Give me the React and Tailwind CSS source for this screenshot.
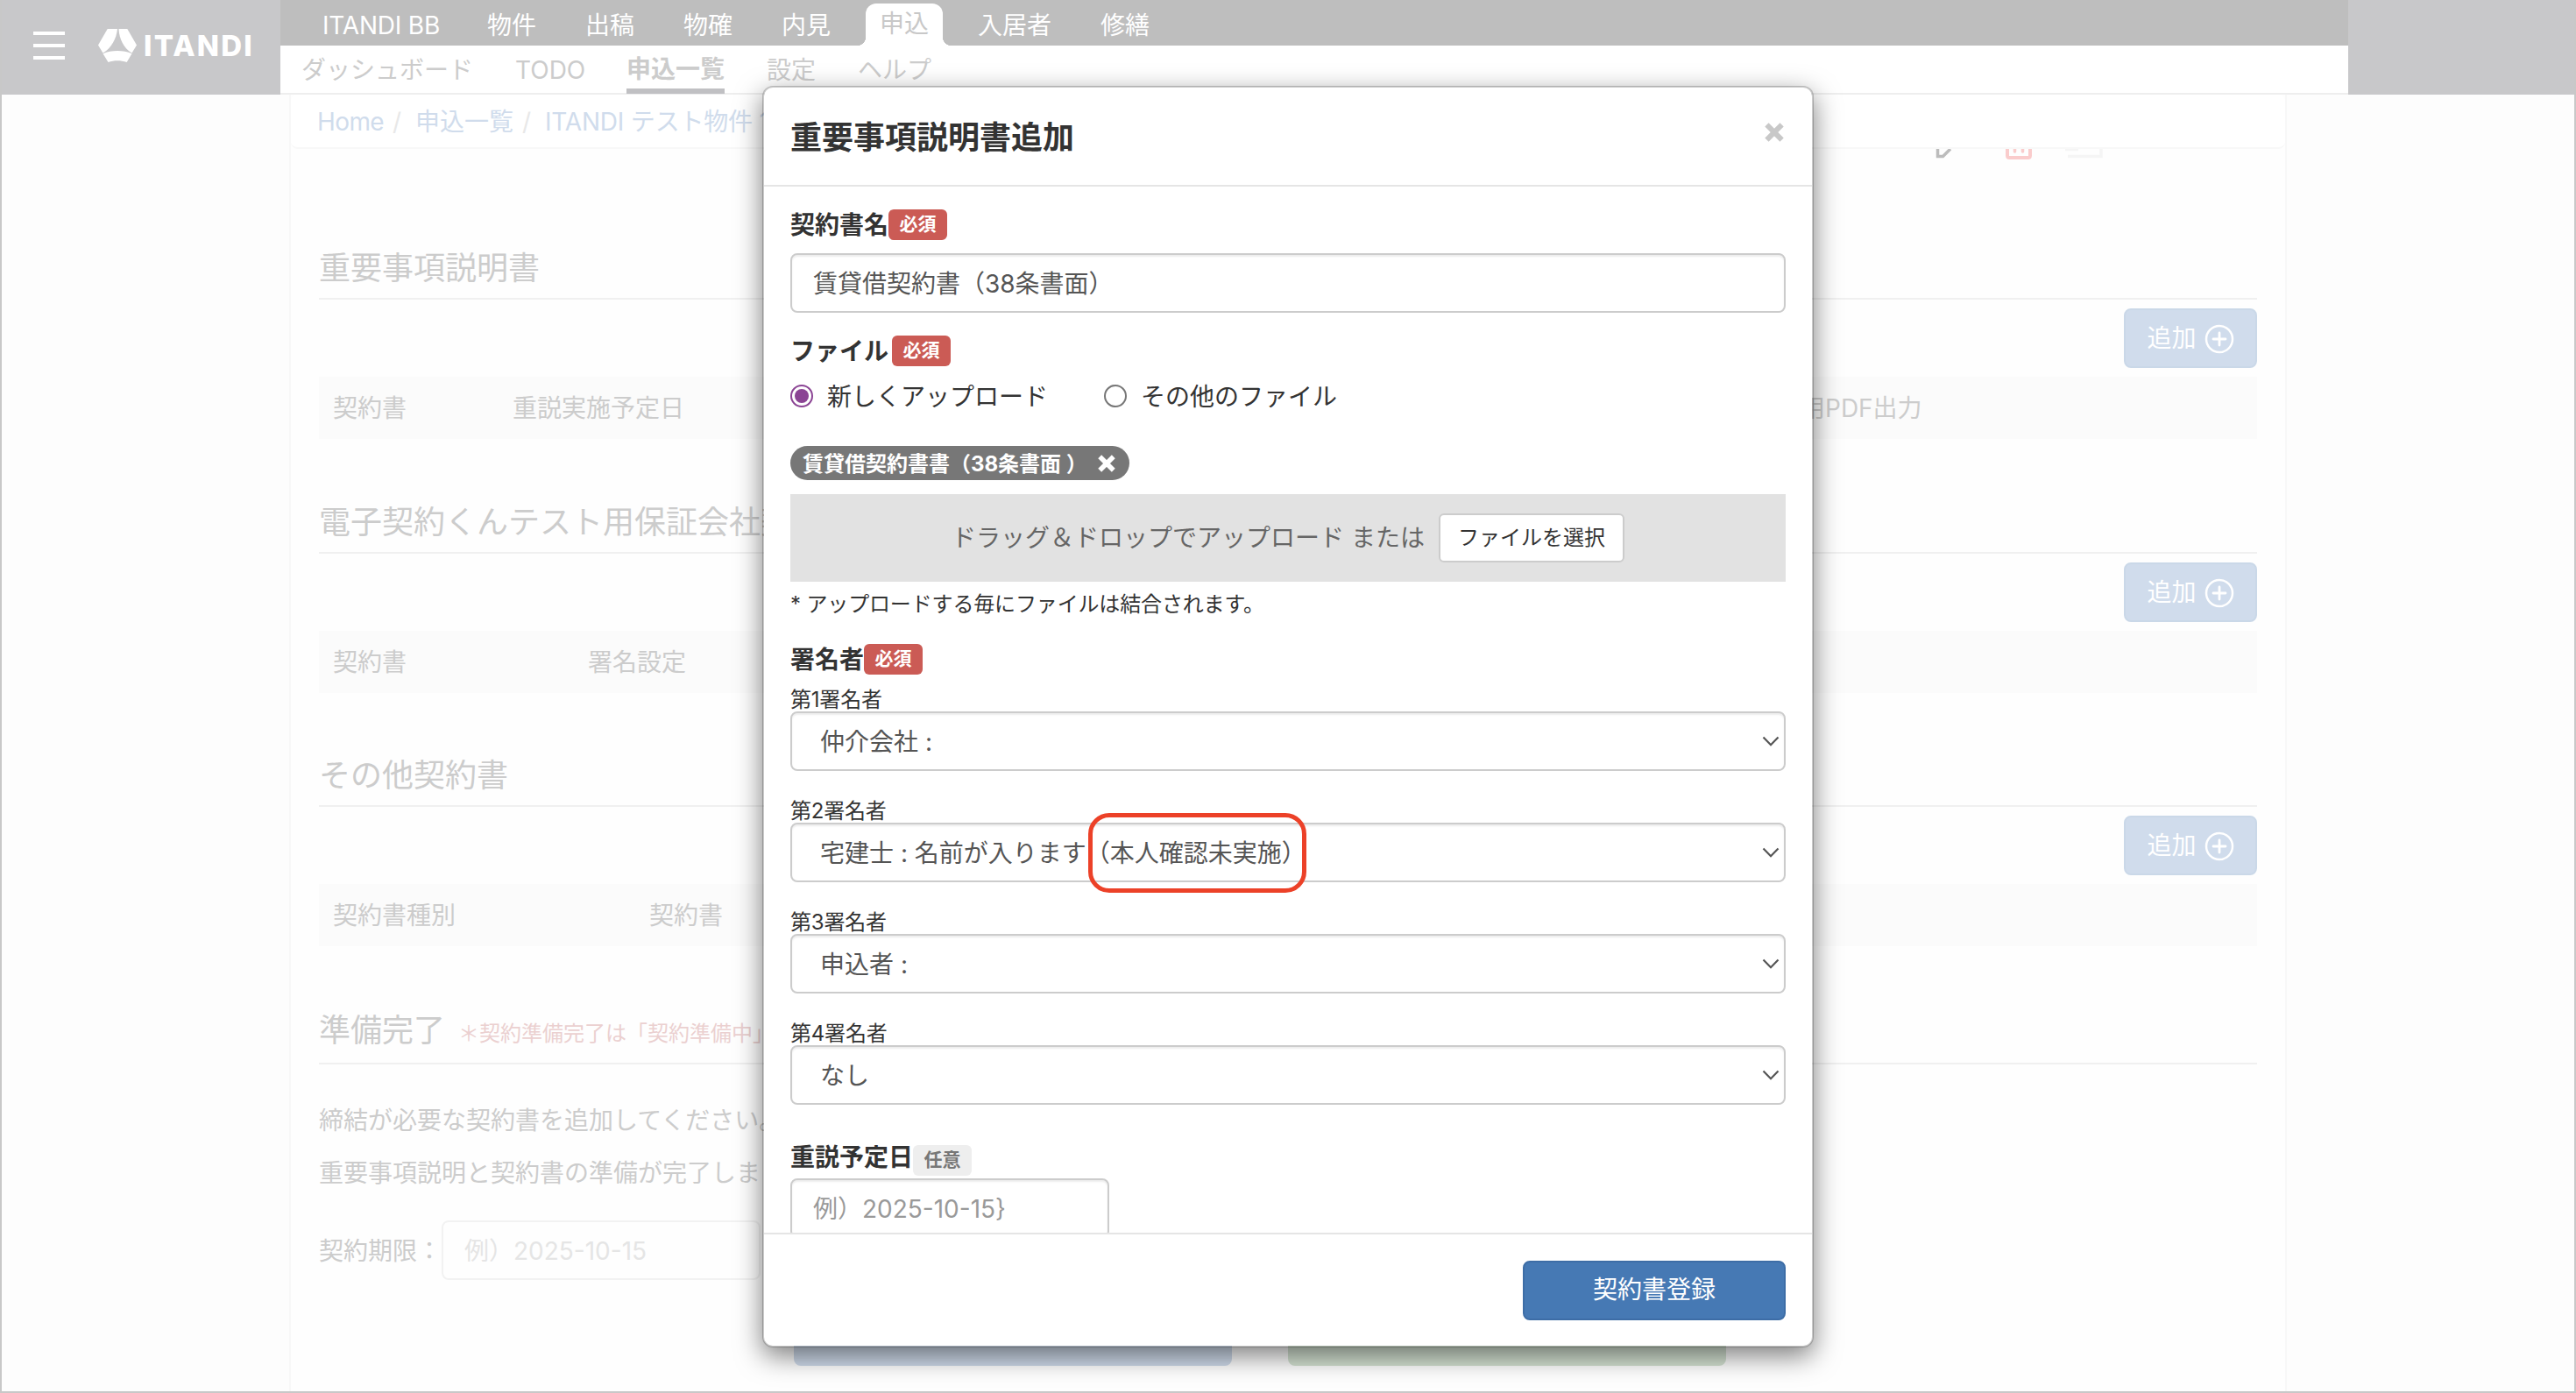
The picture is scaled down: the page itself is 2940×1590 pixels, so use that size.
import { useState } from "react";

const NAV = ["物件", "出稿", "物確", "内見"];

const SECTIONS = [
  {
    title: "重要事項説明書",
    columns: [
      { label: "契約書", width: "w-[205px]" },
      { label: "重説実施予定日", width: "w-[1414px]" },
      { label: "重説用PDF出力", width: "w-[400px]" },
    ],
  },
  {
    title: "電子契約くんテスト用保証会社契約書",
    columns: [
      { label: "契約書", width: "w-[291px]" },
      { label: "署名設定", width: "w-[400px]" },
    ],
  },
  {
    title: "その他契約書",
    columns: [
      { label: "契約書種別", width: "w-[361px]" },
      { label: "契約書", width: "w-[400px]" },
    ],
  },
];

const SIGNERS = [
  { label: "第1署名者", value: "仲介会社 :" },
  { label: "第2署名者", value: "宅建士 : 名前が入ります", note: "（本人確認未実施）" },
  { label: "第3署名者", value: "申込者 :" },
  { label: "第4署名者", value: "なし" },
];

const FIELD =
  "flex h-[68px] items-center rounded-lg border-2 border-[#ccc] bg-white pt-1 text-[#555] shadow-[inset_0_2px_2px_rgba(0,0,0,0.075)]";

function Logo() {
  return (
    <div className="ml-[38px] flex items-center gap-[8px]">
      <svg width="44" height="38" viewBox="0 0 44 38" fill="#fff">
        <path d="M10.700 0H22C21 11 15 22 5.500 27.500L0 18.500z" />
        <path d="M33.300 0H23.500C24 11 29 22 38.500 27.500L44 18.500z" />
        <path d="M5.500 28.200C15 23.800 29 23.800 38.500 28.200L32.700 38C26 35.800 18 35.800 11.500 38z" />
      </svg>
      <span className="text-[33px] font-extrabold leading-none tracking-[2.2px] text-white">ITANDI</span>
    </div>
  );
}

function GlobalHeader() {
  return (
    <header className="flex h-[108px]">
      <div className="flex w-[320px] items-center bg-[#c8c8ca] pb-1">
        <div className="ml-[38px] flex flex-col gap-2.5">
          <span className="h-1 w-9 bg-white" />
          <span className="h-1 w-9 bg-white" />
          <span className="h-1 w-9 bg-white" />
        </div>
        <Logo />
      </div>
      <div className="flex w-[2360px] flex-col">
        <nav className="flex h-[52px] items-center bg-[#bebebe] pt-[7px] text-white">
          <span className="w-[188px] pl-[48px] tracking-[-0.2px] whitespace-nowrap">ITANDI BB</span>
          <div className="ml-12 flex gap-[56px]">
            {NAV.map((item) => (
              <span key={item} className="w-14">{item}</span>
            ))}
          </div>
          <span className="relative ml-10 flex h-12 w-[88px] items-center justify-center self-end rounded-t-xl bg-white text-[#c8c8c8]">
            申込
            <i className="absolute -left-[10px] bottom-0 size-[10px] bg-[radial-gradient(circle_at_0_0,#bebebe_10px,#fff_10.5px)]" />
            <i className="absolute -right-[10px] bottom-0 size-[10px] bg-[radial-gradient(circle_at_100%_0,#bebebe_10px,#fff_10.5px)]" />
          </span>
          <span className="ml-10">入居者</span>
          <span className="ml-[56px]">修繕</span>
        </nav>
        <nav className="flex h-[56px] items-center border-b-2 border-[#eee] bg-white pl-6 text-[#ccc]">
          <span className="w-[244px] pt-1">ダッシュボード</span>
          <span className="w-[127px] pt-1">TODO</span>
          <span className="flex h-[56px] w-[112px] items-center border-b-[6px] border-[#c0c0c3] pt-2 font-bold">申込一覧</span>
          <span className="ml-[48px] pt-1">設定</span>
          <span className="ml-[48px] pt-1">ヘルプ</span>
        </nav>
      </div>
      <div className="w-[260px] bg-[#c8c8ca]" />
    </header>
  );
}

function Breadcrumb() {
  return (
    <div className="flex h-[62px] items-center rounded-lg border-b-2 border-[#f8f8f8] bg-white pt-1 pl-[30px] text-[#d0dcec] whitespace-nowrap">
      <span className="w-[86px] tracking-[-0.6px]">Home</span>
      <span className="w-[26px] text-[#e8e8e8]">/</span>
      <span className="w-[122px]">申込一覧</span>
      <span className="w-[26px] text-[#e8e8e8]">/</span>
      <span className="tracking-[-0.2px]">ITANDI テスト物件 101</span>
    </div>
  );
}

// The toolbar is scrolled under the breadcrumb, so only the icon bottoms show
function ToolbarIcons() {
  return (
    <div className="flex h-[13px] pl-[1876px]">
      <svg width="200" height="13" viewBox="0 0 200 13" fill="none">
        <path d="M3.500 0v8.500h6L18 0" stroke="#bcbcbc" strokeWidth="3.500" />
        <path d="M83 0v7.500q0 2.500 2.500 2.500h21q2.500 0 2.500-2.500V0" stroke="#facccc" strokeWidth="4" />
        <path d="M91.500 0v3M100.500 0v3" stroke="#facccc" strokeWidth="3.500" strokeLinecap="round" />
        <path d="M149 .500h15M152 8.500h38V0" stroke="#f5f5f5" strokeWidth="3.500" />
      </svg>
    </div>
  );
}

function PlusCircle() {
  return (
    <svg width="34" height="34" viewBox="0 0 34 34" fill="none" stroke="#fff">
      <circle cx="17" cy="17" r="15" strokeWidth="2.500" />
      <path d="M17 10v14M10 17h14" strokeWidth="2.800" strokeLinecap="round" />
    </svg>
  );
}

function Section({ title, columns }) {
  return (
    <section className="h-[289.500px]">
      <h2 className="flex h-[72px] items-center border-b-2 border-[#f0f0f0] pt-[3px] text-[36px] text-[#ccc]">{title}</h2>
      <div className="mt-[10px] flex justify-end">
        <button className="flex h-[68px] w-[152px] items-center justify-center gap-[9px] rounded-lg border-2 border-[#cad8e8] bg-[#d0dcec] pt-0.5 text-white">
          追加
          <PlusCircle />
        </button>
      </div>
      <div className="mt-[10px] flex h-[71px] items-center bg-[#fbfbfb] pt-[3px] pl-4 whitespace-nowrap text-[#ccc]">
        {columns.map((c) => (
          <span key={c.label} className={`${c.width} shrink-0`}>{c.label}</span>
        ))}
      </div>
    </section>
  );
}

function Preparation() {
  return (
    <section className="text-[#ccc] whitespace-nowrap">
      <h2 className="flex h-[76.500px] items-center gap-[15px] border-b-2 border-[#f0f0f0] text-[36px]">
        準備完了
        <small className="pt-2 text-[24px] text-[#ebd0d0]">＊契約準備完了は「契約準備中」</small>
      </h2>
      <p className="mt-[34px] h-[60px] leading-[60px]">締結が必要な契約書を追加してください。</p>
      <p className="h-[60px] leading-[60px]">重要事項説明と契約書の準備が完了しました</p>
      <div className="mt-[24px] flex h-[68px] items-center">
        <span className="w-[140px] pt-[3px]">契約期限：</span>
        <span className="flex h-[68px] w-[364px] items-center rounded-lg border-2 border-[#f2f2f2] pt-[3px] pl-6 text-[#e5e5e5]">
          例）2025-10-15
        </span>
      </div>
      <div className="mt-[30px] ml-[542px] flex gap-16">
        <span className="h-[68px] w-[500px] rounded-lg bg-[#d0dcec]" />
        <span className="h-[68px] w-[500px] rounded-lg bg-[#d6e4d4]" />
      </div>
    </section>
  );
}

function Badge({ optional }) {
  return (
    <span
      className={`flex h-[35px] w-[67px] items-center justify-center rounded-md pb-0.5 text-[21px] font-bold ${
        optional ? "bg-[#eee] text-[#777]" : "bg-[#cb5b55] text-white"
      }`}
    >
      {optional ? "任意" : "必須"}
    </span>
  );
}

function FieldTitle({ children }) {
  return (
    <div className="flex h-[35px] items-center font-bold">
      <span className="pt-0.5">{children}</span>
      <Badge />
    </div>
  );
}

function Cross({ size, color }) {
  return (
    <svg width={size} height={size} viewBox="0 0 20 20" stroke={color} strokeWidth="5.500">
      <path d="M2.200 2.200l15.600 15.600M17.800 2.200L2.200 17.800" />
    </svg>
  );
}

function Radio({ checked }) {
  return (
    <span
      className={`flex size-[26px] items-center justify-center rounded-full border-2 ${
        checked ? "border-[#8b4494]" : "border-[#777]"
      }`}
    >
      {checked && <i className="size-4 rounded-full bg-[#8b4494]" />}
    </span>
  );
}

function SignerSelect({ label, value, note }) {
  return (
    <div className="h-[127px]">
      <div className="h-[27px] text-[24px] leading-[27px] tracking-[-0.2px]">{label}</div>
      <div className={`${FIELD} justify-between pr-[5px] pl-8`}>
        <div className="flex items-center">
          <span className="whitespace-pre">{value}</span>
          {note && (
            <span className="relative -ml-[1px]">
              {note}
              <i className="absolute -top-[27px] left-[3px] h-[91px] w-[249px] rounded-[24px] border-[5px] border-[#ec4128]" />
            </span>
          )}
        </div>
        <svg className="mb-1" width="20" height="12" viewBox="0 0 20 12" fill="none" stroke="#555" strokeWidth="2.200">
          <path d="M1.500 1.500L10 10.200l8.500-8.700" />
        </svg>
      </div>
    </div>
  );
}

function ContractModal() {
  const [mode, setMode] = useState("upload");

  return (
    <div className="flex h-[1440px] w-[1200px] flex-col rounded-xl border-2 border-black/20 bg-white bg-clip-padding text-[#333] shadow-[0_10px_30px_rgba(0,0,0,0.5)]">
      <div className="flex h-[113px] shrink-0 items-center justify-between border-b-2 border-[#e5e5e5] pr-[32px] pl-[30px]">
        <h1 className="pt-[3px] text-[36px] font-bold">重要事項説明書追加</h1>
        <div className="pb-[10px]">
          <Cross size={22} color="#c8c8c8" />
        </div>
      </div>

      <div className="h-[1194px] shrink-0 overflow-hidden px-[30px] pt-[26px]">
        <FieldTitle>契約書名</FieldTitle>
        <div className={`${FIELD} mt-[15px] pl-6`}>賃貸借契約書（38条書面）</div>

        <div className="mt-[26px]">
          <FieldTitle>
            <span className="mr-[4px]">ファイル</span>
          </FieldTitle>
        </div>
        <div className="mt-[14px] flex h-10 items-center">
          <label className="flex w-[358px] items-center gap-4" onClick={() => setMode("upload")}>
            <Radio checked={mode === "upload"} />
            <span className="pt-[3px]">新しくアップロード</span>
          </label>
          <label className="flex items-center gap-4" onClick={() => setMode("other")}>
            <Radio checked={mode === "other"} />
            <span className="pt-[3px]">その他のファイル</span>
          </label>
        </div>
        <div className="mt-[37px] flex h-[39px] w-[387px] items-center justify-between rounded-full bg-[#777] pr-4 pl-3.5 text-[24px] font-bold whitespace-nowrap text-white">
          <span className="pt-0.5">賃貸借契約書書（38条書面 ）</span>
          <Cross size={20} color="#fff" />
        </div>
        <div className="mt-4 flex h-[100px] items-center justify-center gap-4 bg-[#e2e2e2] text-[#666]">
          <span className="pt-0.5">ドラッグ＆ドロップでアップロード または</span>
          <button className="h-[56px] w-[212px] rounded-md border-2 border-[#ccc] bg-white text-[24px] text-[#333]">
            ファイルを選択
          </button>
        </div>
        <p className="mt-[11px] h-[30px] text-[24px] leading-[30px] tracking-[-0.150px]">
          * アップロードする毎にファイルは結合されます。
        </p>

        <div className="mt-[30px]">
          <FieldTitle>署名者</FieldTitle>
        </div>
        <div className="mt-[15px]">
          {SIGNERS.map((s) => (
            <SignerSelect key={s.label} {...s} />
          ))}
        </div>

        <div className="mt-[14px] flex h-[35px] items-start font-bold">
          <span className="leading-[28px]">重説予定日</span>
          <Badge optional />
        </div>
        <div className={`${FIELD} mt-[3px] w-[364px] pl-6 text-[#999]`}>例）2025-10-15{"}"}</div>
      </div>

      <div className="flex flex-1 items-center justify-end border-t-2 border-[#e5e5e5] pr-[30px]">
        <button className="h-[68px] w-[300px] rounded-lg border-2 border-[#3d6da6] bg-[#4679b4] pt-px text-white">
          契約書登録
        </button>
      </div>
    </div>
  );
}

export default function App() {
  return (
    <div className="relative h-[1590px] w-[2940px] overflow-hidden bg-[#fdfdfd] font-['Inter','Noto_Sans_CJK_JP',sans-serif] text-[28px] leading-[1.4]">
      <GlobalHeader />
      <main className="mx-auto h-[1482px] w-[2280px] border-x-2 border-[#f8f8f8] bg-[#fefefe]">
        <Breadcrumb />
        <ToolbarIcons />
        <div className="px-[32px] pt-[87px]">
          {SECTIONS.map((s) => (
            <Section key={s.title} {...s} />
          ))}
          <Preparation />
        </div>
      </main>

      <div className="absolute inset-0 flex items-start justify-center border-x-2 border-b-2 border-[#c8c8c8] pt-[98px]">
        <ContractModal />
      </div>
    </div>
  );
}
